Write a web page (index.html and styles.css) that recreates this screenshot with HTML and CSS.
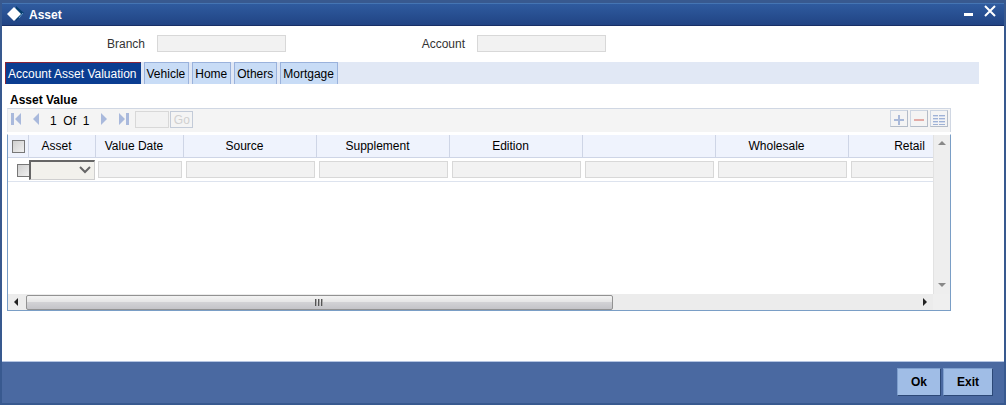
FILE: index.html
```html
<!DOCTYPE html>
<html lang="en">
<head>
  <meta charset="UTF-8" />
  <meta name="viewport" content="width=device-width, initial-scale=1.0"/>
  <title>Asset</title>
  <link rel="stylesheet" href="styles.css">
</head>
<body>

  <div class="window">
    <header class="title-bar">
      <svg class="logo" width="18" height="18" viewBox="0 0 18 18">
        <path d="M10 0L18 7L10 15Z" fill="#063f70"/>
        <path d="M13 12L17 7" fill="none" stroke="#6b9dcc"/>
        <path d="M8 1L15 8L8 15L1 8Z" fill="#fff"/>
      </svg>
      <h1>Asset</h1>
      <button class="win-button" type="button" aria-label="Minimize">
        <svg width="12" height="12" viewBox="0 0 12 12"><path d="M2 8H11V11H2Z" fill="#fff"/></svg>
      </button>
      <button class="win-button" type="button" aria-label="Close">
        <svg width="12" height="12" viewBox="0 0 12 12"><path d="M1 1L11 11M11 1L1 11" stroke="#fff" stroke-width="2"/></svg>
      </button>
    </header>

    <main>
      <div class="fields">
        <div class="field">
          <label for="branch">Branch</label>
          <input id="branch" type="text" readonly>
        </div>
        <div class="field">
          <label for="account">Account</label>
          <input id="account" type="text" readonly>
        </div>
      </div>

      <nav class="tabs">
        <a class="tab active" href="#valuation">Account Asset Valuation</a>
        <a class="tab" href="#vehicle">Vehicle</a>
        <a class="tab" href="#home">Home</a>
        <a class="tab" href="#others">Others</a>
        <a class="tab" href="#mortgage">Mortgage</a>
      </nav>

      <section class="asset-value" id="valuation">
        <h2>Asset Value</h2>

        <div class="toolbar">
          <button class="nav-button" type="button" aria-label="First">
            <svg width="12" height="12" viewBox="0 0 12 12"><path d="M0 0H3V12H0ZM10 0V12L4 6Z"/></svg>
          </button>
          <button class="nav-button" type="button" aria-label="Previous">
            <svg width="12" height="12" viewBox="0 0 12 12"><path d="M8 0V12L2 6Z"/></svg>
          </button>
          <span class="page-count">1&nbsp; Of&nbsp; 1</span>
          <button class="nav-button" type="button" aria-label="Next">
            <svg width="12" height="12" viewBox="0 0 12 12"><path d="M3 0V12L9 6Z"/></svg>
          </button>
          <button class="nav-button" type="button" aria-label="Last">
            <svg width="12" height="12" viewBox="0 0 12 12"><path d="M8 0H11V12H8ZM1 0V12L7 6Z"/></svg>
          </button>
          <input class="page-input" type="text" aria-label="Page number" disabled>
          <button class="go-button" type="button" disabled>Go</button>

          <div class="row-actions">
            <button class="row-button" type="button" aria-label="Add row">
              <svg width="16" height="15" viewBox="0 0 16 15"><path d="M3 9H13M8 4V14" stroke="#a9b9d9" stroke-width="2"/></svg>
            </button>
            <button class="row-button" type="button" aria-label="Delete row">
              <svg width="16" height="15" viewBox="0 0 16 15"><path d="M3 9H13" stroke="#e3aba6" stroke-width="2"/></svg>
            </button>
            <button class="row-button" type="button" aria-label="Single record view">
              <svg width="16" height="15" viewBox="0 0 16 15">
                <path d="M2 4.5H7M8 4.5H14M2 7.5H7M8 7.5H14M2 10.5H7M8 10.5H14M2 13.5H7M8 13.5H14" stroke="#9fb2d6"/>
                <path d="M2 5.5H7M8 5.5H14M2 8.5H7M8 8.5H14M2 11.5H7M8 11.5H14" stroke="#d3dcee"/>
              </svg>
            </button>
          </div>
        </div>

        <div class="grid">
          <div class="grid-view">
            <table>
              <colgroup>
                <col class="col-check">
                <col class="col-asset">
                <col class="col-date">
                <col class="col-wide" span="6">
              </colgroup>
              <thead>
                <tr>
                  <th><input type="checkbox" aria-label="Select all rows"></th>
                  <th>Asset</th>
                  <th>Value Date</th>
                  <th>Source</th>
                  <th>Supplement</th>
                  <th>Edition</th>
                  <th></th>
                  <th>Wholesale</th>
                  <th>Retail</th>
                </tr>
              </thead>
              <tbody>
                <tr>
                  <td class="check-cell"><input type="checkbox" aria-label="Select row"></td>
                  <td class="select-cell">
                    <div class="select-box">
                      <select aria-label="Asset"><option></option></select>
                      <svg class="arrow" width="12" height="8" viewBox="0 0 12 8"><path d="M1 1L6 6L11 1" fill="none" stroke="#666" stroke-width="2"/></svg>
                    </div>
                  </td>
                  <td><input type="text" aria-label="Value Date" readonly></td>
                  <td><input type="text" aria-label="Source" readonly></td>
                  <td><input type="text" aria-label="Supplement" readonly></td>
                  <td><input type="text" aria-label="Edition" readonly></td>
                  <td><input type="text" aria-label="Value" readonly></td>
                  <td><input type="text" aria-label="Wholesale" readonly></td>
                  <td><input type="text" aria-label="Retail" readonly></td>
                </tr>
              </tbody>
            </table>
          </div>
          <div class="scroll-y">
            <svg width="8" height="5" viewBox="0 0 8 5"><path d="M4 0L8 4H0Z" fill="#888"/></svg>
            <svg width="8" height="5" viewBox="0 0 8 5"><path d="M0 0H8L4 4Z" fill="#888"/></svg>
          </div>
          <div class="scroll-x">
            <svg width="18" height="8" viewBox="0 0 18 8"><path d="M6 4L10 0V8Z" fill="#222"/></svg>
            <div class="track">
              <div class="thumb">
                <svg width="9" height="7" viewBox="0 0 9 7"><path d="M.5 0V7M3.5 0V7M6.5 0V7" stroke="#555"/><path d="M1.5 0V7M4.5 0V7M7.5 0V7" stroke="#aaa"/></svg>
              </div>
            </div>
            <svg width="18" height="8" viewBox="0 0 18 8"><path d="M12 4L8 0V8Z" fill="#222"/></svg>
          </div>
          <div class="corner"></div>
        </div>
      </section>
    </main>

    <footer>
      <button type="button">Ok</button>
      <button type="button">Exit</button>
    </footer>
  </div>

</body>
</html>
```
FILE: styles.css
```css
* {
  box-sizing: border-box;
}

body {
  margin: 0;
  font-family: "Liberation Sans", Arial, sans-serif;
  font-size: 12px;
  line-height: 14px;
  color: #000;
}

button,
input,
select {
  margin: 0;
  padding: 0;
  border-radius: 0;
  font: inherit;
}

svg {
  display: block;
  flex: none;
}

.window {
  display: flex;
  flex-direction: column;
  min-height: 100vh;
  background: #fff;
  border: 2px solid #38598f;
  border-top-width: 3px;
}

/* Title bar */
.title-bar {
  display: flex;
  align-items: center;
  height: 23px;
  padding: 0 8px 0 4px;
  background: linear-gradient(#2f5b9f, #214484);
  border-top: 1px solid #4575b3;
  border-bottom: 1px solid #182f66;
}

.title-bar h1 {
  flex: 1;
  margin: 0 0 0 5px;
  font-size: 12px;
  color: #fff;
}

.win-button {
  align-self: flex-start;
  margin: 1px 0 0 10px;
  background: none;
  border: 0;
}

main {
  flex: 1;
}

/* Branch and account */
.fields {
  display: flex;
  padding: 9px 0 10px;
}

.field {
  display: flex;
  align-items: center;
  gap: 12px;
  width: 320px;
  color: #333;
}

.field label {
  width: 143px;
  text-align: right;
}

input[type="text"] {
  height: 17px;
  background: #f2f2f2;
  border: 1px solid #d8d8d8;
}

.field input {
  width: 129px;
}

/* Tabs */
.tabs {
  display: flex;
  gap: 3px;
  margin: 0 25px 0 3px;
  background: #e1e8f5;
}

.tab {
  height: 22px;
  padding: 4px 3px 4px 2px;
  background: #c8dcf6;
  border: 1px solid #9ab2dc;
  border-bottom: 0;
  color: #000;
  text-decoration: none;
}

.tab.active {
  background: #0a3d91;
  border-color: #8a2538 #0a3d91 #0a3d91 #8a2538;
  color: #fff;
}

/* Asset value */
.asset-value {
  margin: 9px 53px 50px 5px;
}

.asset-value h2 {
  margin: 0 0 1px 3px;
  font-size: 12px;
}

.toolbar {
  display: flex;
  align-items: flex-start;
  height: 24px;
  padding: 1px 2px 0 3px;
  background: #f4f4f4;
  border: 1px solid #d0d7e3;
  border-left-color: #e4e8ef;
  border-bottom: 0;
}

.nav-button {
  margin: 3px 8px 0 0;
  background: none;
  border: 0;
}

.nav-button path {
  fill: #a9b9dc;
}

.page-count {
  margin: 4px 9px 0 -1px;
}

.toolbar .page-input {
  width: 34px;
  margin: 1px 1px 0 -3px;
  background: #f2f2f2;
}

.go-button {
  width: 23px;
  height: 17px;
  margin-top: 1px;
  background: #f4f4f4;
  border: 1px solid #c3cbd8;
  color: #d0d0d0;
}

.row-actions {
  display: flex;
  gap: 2px;
  margin-left: auto;
}

.row-button {
  width: 18px;
  height: 17px;
  background: #f4f4f4;
  border: 1px solid #ccd5e2;
  border-right-color: #b4bcc8;
  border-bottom-color: #b4bcc8;
}

/* Data grid */
.grid {
  display: grid;
  grid-template-columns: minmax(0, 1fr) 17px;
  grid-template-rows: 159px 16px;
  margin-top: 2px;
  border: 1px solid #7a9ec6;
  border-top-color: #fff;
}

.grid-view {
  overflow: hidden;
}

table {
  width: 974px;
  table-layout: fixed;
  border-collapse: separate;
  border-spacing: 0;
}

.col-check {
  width: 21px;
}

.col-asset {
  width: 67px;
}

.col-date {
  width: 88px;
}

.col-wide {
  width: 133px;
}

th {
  height: 23px;
  padding: 0 11px 0 0;
  background: #eff3fd;
  border-right: 1px solid #ced5e6;
  border-bottom: 1px solid #ced5e6;
  font-weight: normal;
  white-space: nowrap;
}

th:first-child {
  padding: 0 0 0 4px;
}

td {
  height: 24px;
  padding: 2px;
  border-bottom: 1px solid #dde3ee;
}

td input[type="text"] {
  display: block;
  width: 100%;
}

input[type="checkbox"] {
  display: block;
  appearance: none;
  width: 13px;
  height: 13px;
  background: linear-gradient(135deg, #cfcfcf, #f0f0f0);
  border: 1px solid #777;
}

.check-cell {
  padding: 2px 0 0 9px;
}

.select-cell {
  padding: 0;
}

.select-box {
  position: relative;
  width: 66px;
}

.select-box select {
  display: block;
  appearance: none;
  width: 100%;
  height: 20px;
  background: #f2f1ec;
  border: 1px solid #cfcfcf;
  border-width: 2px 1px 1px 2px;
  border-top-color: #666;
  border-left-color: #666;
}

.select-box .arrow {
  position: absolute;
  top: 6px;
  right: 4px;
  pointer-events: none;
}

/* Scroll bars */
.scroll-y {
  display: flex;
  flex-direction: column;
  align-items: center;
  justify-content: space-between;
  padding: 6px 0;
  background: #eee;
  border-left: 1px solid #e2e2e2;
}

.scroll-x {
  display: flex;
  align-items: center;
  background: #ececec;
}

.track {
  flex: 1;
}

.thumb {
  display: flex;
  align-items: center;
  justify-content: center;
  width: 66%;
  height: 15px;
  background: linear-gradient(#f3f3f3, #e6e6e6 45%, #d2d2d5 50%, #c4c4c8);
  border: 1px solid #929292;
  border-radius: 2px;
}

.corner {
  background: #efefef;
}

/* Footer */
footer {
  display: flex;
  justify-content: flex-end;
  gap: 2px;
  padding: 6px 11px 7px;
  background: #4a69a1;
  border-top: 1px solid #b5c5e2;
}

footer button {
  height: 28px;
  padding: 0 13px;
  background: #a0bde6;
  border: 1px solid #7e9fce;
  border-right-color: #2c4877;
  border-bottom-color: #2c4877;
  font-weight: bold;
}
```
